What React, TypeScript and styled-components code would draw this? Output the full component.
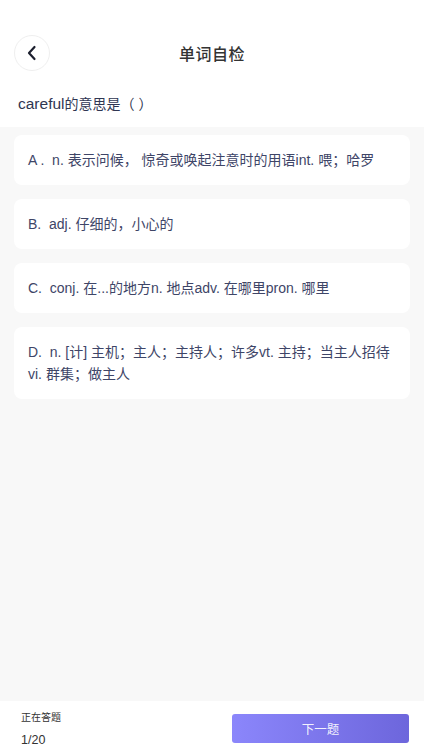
import React from "react";
import styled, { createGlobalStyle } from "styled-components";

const Global = createGlobalStyle`
  html, body { margin: 0; padding: 0; background: #f8f8f8; }
  body { font-family: "Liberation Sans", "Noto Sans CJK SC", sans-serif; }
  * { box-sizing: border-box; }
`;

const Page = styled.div`
  width: 424px;
  height: 754px;
  display: flex;
  flex-direction: column;
  background: #f8f8f8;
`;

const Top = styled.div`
  background: #fff;
  padding-top: 35px;
`;

const Header = styled.div`
  display: grid;
  grid-template-columns: 50px 1fr 50px;
  align-items: center;
  height: 36px;
`;

const BackButton = styled.button`
  margin-left: 14px;
  width: 36px;
  height: 36px;
  border-radius: 50%;
  border: 1px solid #efefef;
  background: #fff;
  padding: 0;
  display: flex;
  align-items: center;
  justify-content: center;
`;

const Title = styled.h1`
  margin: 0;
  text-align: center;
  font-size: 16px;
  font-weight: 500;
  color: #333;
  letter-spacing: 0.5px;
`;

const Question = styled.div`
  padding: 22px 18px 12px;
  font-size: 14px;
  line-height: 22px;
  color: #2f3652;
`;

const Latin = styled.span`
  font-size: 15.5px;
`;

const List = styled.div`
  flex: 1;
  padding: 8px 14px;
  display: flex;
  flex-direction: column;
  gap: 14px;
`;

const Option = styled.div`
  background: #fff;
  border-radius: 8px;
  padding: 14px 14px;
  font-size: 14px;
  line-height: 22px;
  color: #3e4567;
  white-space: pre-wrap;
`;

const Footer = styled.div`
  background: #fff;
  height: 53px;
  display: flex;
  align-items: center;
  justify-content: space-between;
  padding: 0 15px 0 21px;
`;

const Progress = styled.div`
  display: flex;
  flex-direction: column;
  gap: 7px;
  padding-top: 4px;
`;

const ProgressLabel = styled.div`
  font-size: 10px;
  line-height: 14px;
  color: #333;
`;

const ProgressCount = styled.div`
  font-size: 12.5px;
  line-height: 16px;
  color: #333;
`;

const NextButton = styled.button`
  width: 177px;
  height: 29px;
  margin-top: 2px;
  border: none;
  border-radius: 3px;
  background: linear-gradient(90deg, #8b86fb 0%, #6d66dc 100%);
  color: rgba(255, 255, 255, 0.92);
  font-family: inherit;
  font-size: 12.5px;
  padding: 0;
`;

const options = [
  "A .  n. 表示问候， 惊奇或唤起注意时的用语int. 喂；哈罗",
  "B.  adj. 仔细的，小心的",
  "C.  conj. 在...的地方n. 地点adv. 在哪里pron. 哪里",
  "D.  n. [计] 主机；主人；主持人；许多vt. 主持；当主人招待vi. 群集；做主人",
];

export default function App() {
  return (
    <Page>
      <Global />
      <Top>
        <Header>
          <BackButton aria-label="返回">
            <svg width="12" height="16" viewBox="0 0 12 16">
              <path d="M8.5 2 L3 8 L8.5 14" fill="none" stroke="#1c1f2e" strokeWidth="2.2" strokeLinecap="round" strokeLinejoin="round" />
            </svg>
          </BackButton>
          <Title>单词自检</Title>
          <div />
        </Header>
        <Question>
          <Latin>careful</Latin>的意思是（ ）
        </Question>
      </Top>
      <List>
        {options.map((o) => (
          <Option key={o}>{o}</Option>
        ))}
      </List>
      <Footer>
        <Progress>
          <ProgressLabel>正在答题</ProgressLabel>
          <ProgressCount>1/20</ProgressCount>
        </Progress>
        <NextButton>下一题</NextButton>
      </Footer>
    </Page>
  );
}
